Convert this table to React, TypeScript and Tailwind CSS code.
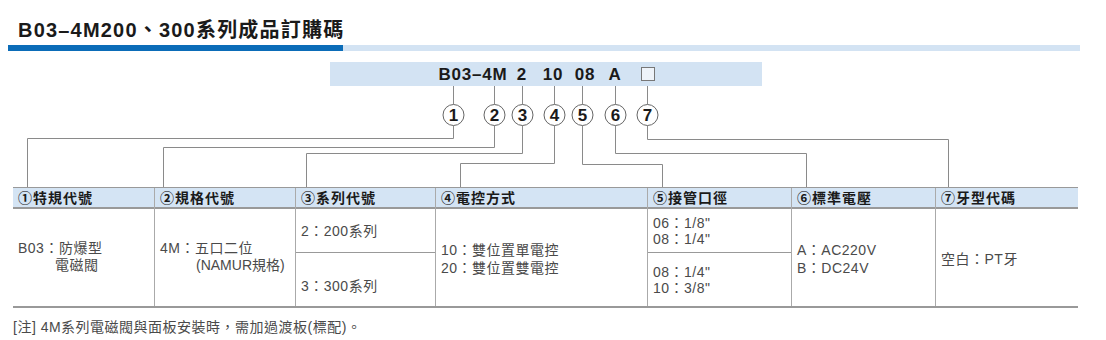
const font = "font-['Liberation_Sans','Noto_Sans_CJK_TC',sans-serif]";

const codeParts = [
  { text: 'B03–4M', x: 473 },
  { text: '2', x: 522 },
  { text: '10', x: 553 },
  { text: '08', x: 585 },
  { text: 'A', x: 615 },
];

// circle x, horizontal y, column target x
const links = [
  { n: '1', x: 453, y: 76, to: 27 },
  { n: '2', x: 494, y: 85, to: 163 },
  { n: '3', x: 522, y: 91, to: 306 },
  { n: '4', x: 554, y: 101, to: 460 },
  { n: '5', x: 582, y: 102, to: 662 },
  { n: '6', x: 615, y: 91, to: 806 },
  { n: '7', x: 647, y: 77, to: 948 },
];

const headers = ['①特規代號', '②規格代號', '③系列代號', '④電控方式', '⑤接管口徑', '⑥標準電壓', '⑦牙型代碼'];

const Diagram = () => {
  return (
    <div className="relative h-[125px] mt-[11px]">
      <div className="ml-[330px] w-[432px] h-[24px] bg-[#d3e3f3]" />
      {codeParts.map((p) => (
        <div
          key={p.text}
          className="absolute top-0 h-[24px] flex items-center justify-center w-[90px] -ml-[45px] text-[17px] font-bold text-[#1a1a1a] leading-none tracking-[0.8px]"
          style={{ left: p.x }}
        >
          {p.text}
        </div>
      ))}
      <div className="absolute top-[5px] left-[641px] w-[14px] h-[14px] border border-[#777] bg-[#eef3f9]" />
      <svg className="absolute inset-0" width="1106" height="125" viewBox="0 0 1106 125">
        {links.map((l) => (
          <g key={l.n} fill="none" stroke="#8a8a8a" strokeWidth="1">
            <line x1={l.x + 0.5} y1={24} x2={l.x + 0.5} y2={42.5} />
            <polyline points={`${l.x + 0.5},63.5 ${l.x + 0.5},${l.y + 0.5} ${l.to + 0.5},${l.y + 0.5} ${l.to + 0.5},125`} />
            <circle cx={l.x + 0.5} cy={53} r={10.5} fill="#fff" stroke="#666" />
            <text
              x={l.x + 0.5}
              y={59}
              textAnchor="middle"
              fill="#1a1a1a"
              stroke="none"
              fontSize="17"
              fontWeight="bold"
              fontFamily="Liberation Sans, sans-serif"
            >
              {l.n}
            </text>
          </g>
        ))}
      </svg>
    </div>
  );
};

const cell = 'border-l border-[#aaa] first:border-l-0';

const App = () => {
  return (
    <div className={`w-[1106px] h-[340px] bg-white overflow-hidden ${font}`}>
      <div className="pt-[19px] pl-[18px] text-[20px] font-bold text-[#1a1a1a] leading-[22px] tracking-[1.2px]">
        B03–4M200、300系列成品訂購碼
      </div>
      <div className="ml-[8px] mt-[4px] w-[1072px] h-[6px] flex">
        <div className="w-[335px] bg-[#0b6cb8]" />
        <div className="flex-1 bg-[#d3e3f3]" />
      </div>

      <Diagram />

      <div className="ml-[13px] w-[1065px] text-[14px] text-[#4a4a4a] tracking-[0.5px]">
        <div className="grid grid-cols-[141px_141px_140px_212px_144px_144px_143px] bg-[#d4e4f4] border-t border-[#999] border-b-2 border-b-[#999] h-[22px]">
          {headers.map((h) => (
            <div key={h} className={`${cell} flex items-center pl-[5px] font-bold text-[#1a1a1a] text-[14px] tracking-[1px]`}>
              {h}
            </div>
          ))}
        </div>
        <div className="grid grid-cols-[141px_141px_140px_212px_144px_144px_143px] border-b-2 border-[#999] h-[99px] leading-[17px]">
          <div className={`${cell} pl-[5px] pt-[31px]`}>
            <div>B03：防爆型</div>
            <div className="pl-[37px]">電磁閥</div>
          </div>
          <div className={`${cell} pl-[5px] pt-[31px]`}>
            <div>4M：五口二位</div>
            <div className="pl-[36px] whitespace-nowrap tracking-normal">(NAMUR規格)</div>
          </div>
          <div className={`${cell} flex flex-col`}>
            <div className="h-[44px] border-b border-[#999] pl-[5px] pt-[14px]">2：200系列</div>
            <div className="flex-1 pl-[5px] pt-[25px]">3：300系列</div>
          </div>
          <div className={`${cell} pl-[5px] pt-[32px] leading-[18px]`}>
            <div>10：雙位置單電控</div>
            <div>20：雙位置雙電控</div>
          </div>
          <div className={`${cell} flex flex-col leading-[16px]`}>
            <div className="h-[44px] border-b border-[#999] pl-[5px] pt-[6px]">
              <div>06：1/8"</div>
              <div>08：1/4"</div>
            </div>
            <div className="flex-1 pl-[5px] pt-[11px]">
              <div>08：1/4"</div>
              <div>10：3/8"</div>
            </div>
          </div>
          <div className={`${cell} pl-[5px] pt-[32px] leading-[18px]`}>
            <div>A：AC220V</div>
            <div>B：DC24V</div>
          </div>
          <div className={`${cell} pl-[5px] pt-[42px]`}>
            <div>空白：PT牙</div>
          </div>
        </div>
        <div className="mt-[9px]">[注] 4M系列電磁閥與面板安裝時，需加過渡板(標配)。</div>
      </div>
    </div>
  );
};

export default App;
